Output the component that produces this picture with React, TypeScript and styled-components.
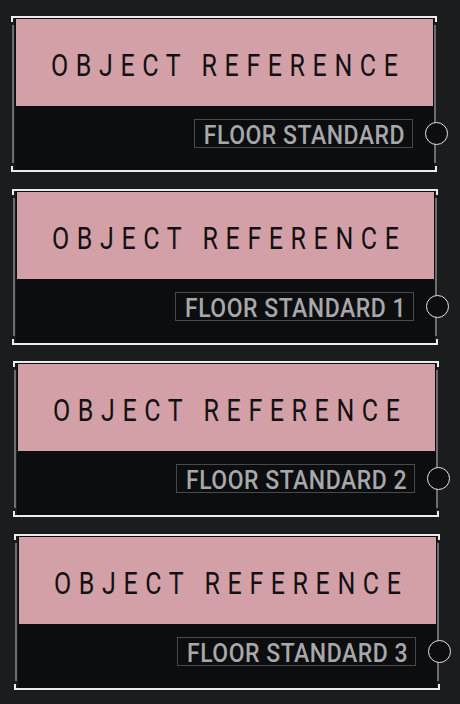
import React from 'react';
import styled, { createGlobalStyle } from 'styled-components';

const GlobalStyle = createGlobalStyle`
  html, body {
    margin: 0;
    padding: 0;
    background: #1b1c1e;
  }
  body {
    font-family: Roboto, 'Liberation Sans', sans-serif;
  }
`;

interface NodeData {
  label: string;
  x: number;
}

const nodes: NodeData[] = [
  { label: 'FLOOR STANDARD', x: 11 },
  { label: 'FLOOR STANDARD 1', x: 12 },
  { label: 'FLOOR STANDARD 2', x: 13 },
  { label: 'FLOOR STANDARD 3', x: 14 },
];

const Canvas = styled.div`
  display: flex;
  flex-direction: column;
  gap: 16.7px;
  padding-top: 16px;
  height: 704px;
  box-sizing: border-box;
  overflow: hidden;
`;

const Node = styled.div<{ $x: number }>`
  position: relative;
  width: 426px;
  height: 156px;
  flex-shrink: 0;
  margin-left: ${({ $x }) => $x}px;
  padding: 2px 3px 2px 4px;
  box-sizing: border-box;
`;

// selection brackets, drawn over the node frame
const Bracket = styled.div<{ $side: 'top' | 'bottom' }>`
  position: absolute;
  left: 0;
  right: 0;
  height: 6px;
  border: 2px solid #ececec;
  ${({ $side }) => ($side === 'top' ? 'top: 0; border-bottom: none;' : 'bottom: 0; border-top: none;')}
  box-sizing: border-box;
`;

const SideLine = styled.div<{ $side: 'left' | 'right' }>`
  position: absolute;
  top: 9px;
  bottom: 9px;
  width: 2px;
  background: #6c6d6f;
  ${({ $side }) => ($side === 'left' ? 'left: 1px;' : 'right: 1px;')}
`;

const Card = styled.div`
  display: flex;
  flex-direction: column;
  height: 100%;
  border: 1px solid #0c0d0f;
  background: #0c0d0f;
  box-sizing: border-box;
`;

const Header = styled.div`
  display: flex;
  align-items: center;
  justify-content: center;
  height: 87px;
  padding-top: 6px;
  box-sizing: border-box;
  background: #d4a0a8;
`;

const Title = styled.span`
  display: inline-block;
  font-size: 25px;
  line-height: 1;
  font-weight: 400;
  letter-spacing: 7.6px;
  margin-right: -7.6px;
  color: #111113;
  transform: scaleY(1.25);
  white-space: nowrap;
`;

const Body = styled.div`
  flex: 1;
  display: flex;
  justify-content: flex-end;
  align-items: flex-start;
  padding: 13px 20px 0 0;
`;

const Tag = styled.div`
  display: flex;
  align-items: flex-start;
  height: 29px;
  padding: 5px 7px 0 9px;
  border: 1px solid #48494c;
  box-sizing: border-box;
`;

const TagText = styled.span`
  display: inline-block;
  font-size: 23px;
  line-height: 22px;
  font-weight: 500;
  letter-spacing: 0.5px;
  color: #a7a8aa;
  transform: scaleY(1.12);
  white-space: nowrap;
`;

const Socket = styled.div`
  position: absolute;
  right: -11px;
  top: 106px;
  width: 23px;
  height: 23px;
  border-radius: 50%;
  border: 1.5px solid #e4e4e4;
  background: #0d0d0f;
  box-sizing: border-box;
`;

export default function App() {
  return (
    <>
      <GlobalStyle />
      <Canvas>
        {nodes.map((n) => (
          <Node key={n.label} $x={n.x}>
            <Card>
              <Header>
                <Title>OBJECT REFERENCE</Title>
              </Header>
              <Body>
                <Tag>
                  <TagText>{n.label}</TagText>
                </Tag>
              </Body>
            </Card>
            <SideLine $side="left" />
            <SideLine $side="right" />
            <Bracket $side="top" />
            <Bracket $side="bottom" />
            <Socket />
          </Node>
        ))}
      </Canvas>
    </>
  );
}
